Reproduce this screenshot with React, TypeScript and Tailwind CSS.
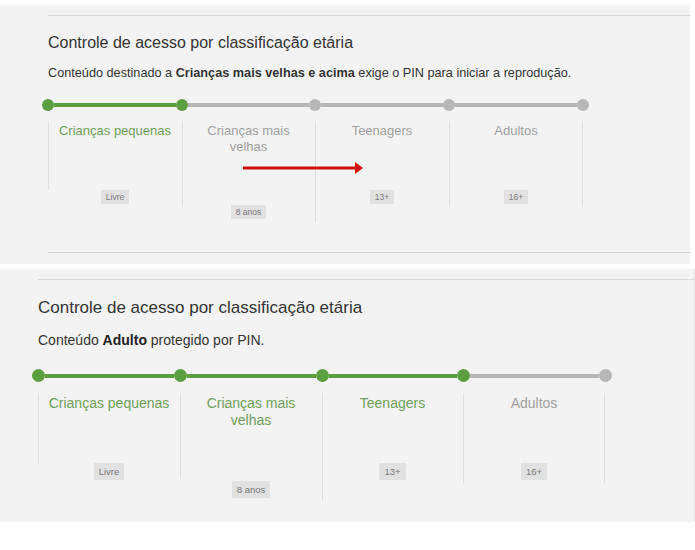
import React from "react";

type Col = { label: string[]; badge: string; active: boolean; line: string; mt: string; w: string };

type PanelCfg = {
  wrap: string;
  title: string;
  subtitle: React.ReactNode;
  subCls: string;
  sliderWrap: string;
  dot: string;
  bar: string;
  activeSegs: number;
  segW: string[];
  colsWrap: string;
  labelCls: string;
  badgeCls: string;
  cols: Col[];
  rightLine: string;
  bottom: React.ReactNode;
};

const GREEN = "bg-[#5c9f40]";
const GREY = "bg-[#b7b7b7]";

function Panel({ c }: { c: PanelCfg }) {
  return (
    <div className={c.wrap}>
      <div className="h-px bg-[#dadada] mt-[10px]" />
      <div className={c.title}>Controle de acesso por classificação etária</div>
      <div className={c.subCls}>{c.subtitle}</div>
      <div className={c.sliderWrap}>
        {[0, 1, 2, 3, 4].map((i) => (
          <React.Fragment key={i}>
            <div className={`${c.dot} ${i <= c.activeSegs ? GREEN : GREY} rounded-full shrink-0`} />
            {i < 4 && (
              <div className={`${c.segW[i]} ${c.bar} ${i < c.activeSegs ? GREEN : GREY} shrink-0`} />
            )}
          </React.Fragment>
        ))}
      </div>
      <div className={c.colsWrap}>
        {c.cols.map((col, i) => (
          <div key={i} className={`relative ${col.w} flex flex-col items-center pt-[2px] shrink-0`}>
            <span className={`absolute left-0 top-0 w-px bg-[#dfdfdf] ${col.line}`} />
            {i === c.cols.length - 1 && (
              <span className={`absolute right-0 top-0 w-px bg-[#dfdfdf] ${c.rightLine}`} />
            )}
            <div className={`${c.labelCls} ${col.active ? "text-[#6fa05b]" : "text-[#a0a0a0]"}`}>
              {col.label.map((l, j) => (
                <div key={j}>{l}</div>
              ))}
            </div>
            <div className={`${c.badgeCls} ${col.mt}`}>{col.badge}</div>
          </div>
        ))}
      </div>
      {c.bottom}
    </div>
  );
}

const top: PanelCfg = {
  wrap: "mt-[5px] w-[690px] h-[259px] bg-[#f3f3f3] pl-[48px] flex flex-col",
  title: "mt-[17px] text-[16px] leading-[20px] text-[#333]",
  subtitle: (
    <>
      Conteúdo destinado a <b className="font-bold">Crianças mais velhas e acima</b> exige o PIN para iniciar a reprodução.
    </>
  ),
  subCls: "mt-[12px] text-[12.7px] leading-[16px] text-[#333]",
  sliderWrap: "mt-[18px] -ml-[6px] flex items-center h-[12px]",
  dot: "w-[12px] h-[12px]",
  bar: "h-[4px]",
  activeSegs: 1,
  segW: ["w-[122px]", "w-[121px]", "w-[122px]", "w-[122px]"],
  colsWrap: "mt-[10px] flex h-[101px]",
  labelCls: "text-[13px] leading-[16px] text-center",
  badgeCls: "bg-[#e1e1e1] text-[#7a7a7a] text-[8.5px] leading-[14px] px-[5px] h-[14px]",
  cols: [
    { label: ["Crianças pequenas"], badge: "Livre", active: true, line: "h-[69px]", mt: "mt-[51px]", w: "w-[134px]" },
    { label: ["Crianças mais", "velhas"], badge: "8 anos", active: false, line: "h-[86px]", mt: "mt-[50px]", w: "w-[133px]" },
    { label: ["Teenagers"], badge: "13+", active: false, line: "h-[101px]", mt: "mt-[51px]", w: "w-[134px]" },
    { label: ["Adultos"], badge: "16+", active: false, line: "h-[86px]", mt: "mt-[51px]", w: "w-[134px]" },
  ],
  rightLine: "h-[86px]",
  bottom: <div className="h-px bg-[#d6d6d6] mt-[30px]" />,
};

const bottom: PanelCfg = {
  wrap: "mt-[5px] w-[695px] h-[253px] bg-[#f3f3f3] pl-[38px] flex flex-col border-r border-[#e3e3e3]",
  title: "mt-[17px] text-[17px] leading-[22px] text-[#333]",
  subtitle: (
    <>
      Conteúdo <b className="font-bold text-[#222]">Adulto</b> protegido por PIN.
    </>
  ),
  subCls: "mt-[12px] text-[14px] leading-[18px] text-[#333]",
  sliderWrap: "mt-[20px] -ml-[6.5px] flex items-center h-[13px]",
  dot: "w-[13px] h-[13px]",
  bar: "h-[4px]",
  activeSegs: 3,
  segW: ["w-[129px]", "w-[129px]", "w-[128px]", "w-[129px]"],
  colsWrap: "mt-[11px] flex h-[108px]",
  labelCls: "text-[14px] leading-[17px] text-center",
  badgeCls: "bg-[#e1e1e1] text-[#777] text-[9.5px] leading-[17px] px-[5px] h-[17px]",
  cols: [
    { label: ["Crianças pequenas"], badge: "Livre", active: true, line: "h-[71px]", mt: "mt-[51px]", w: "w-[142px]" },
    { label: ["Crianças mais", "velhas"], badge: "8 anos", active: true, line: "h-[86px]", mt: "mt-[52px]", w: "w-[142px]" },
    { label: ["Teenagers"], badge: "13+", active: true, line: "h-[108px]", mt: "mt-[51px]", w: "w-[141px]" },
    { label: ["Adultos"], badge: "16+", active: false, line: "h-[91px]", mt: "mt-[51px]", w: "w-[142px]" },
  ],
  rightLine: "h-[91px]",
  bottom: null,
};

export default function App() {
  return (
    <div className="relative w-[695px] h-[550px] bg-white overflow-hidden" style={{ fontFamily: '"Liberation Sans", Arial, sans-serif' }}>
      <Panel c={top} />
      <Panel c={bottom} />
      <svg className="absolute left-[240px] top-[160px]" width="130" height="18" viewBox="0 0 130 18">
        <line x1="3" y1="8" x2="117" y2="8" stroke="#d10f0f" strokeWidth="3" />
        <polygon points="115,2 123,8 115,14" fill="#d10f0f" />
      </svg>
    </div>
  );
}
